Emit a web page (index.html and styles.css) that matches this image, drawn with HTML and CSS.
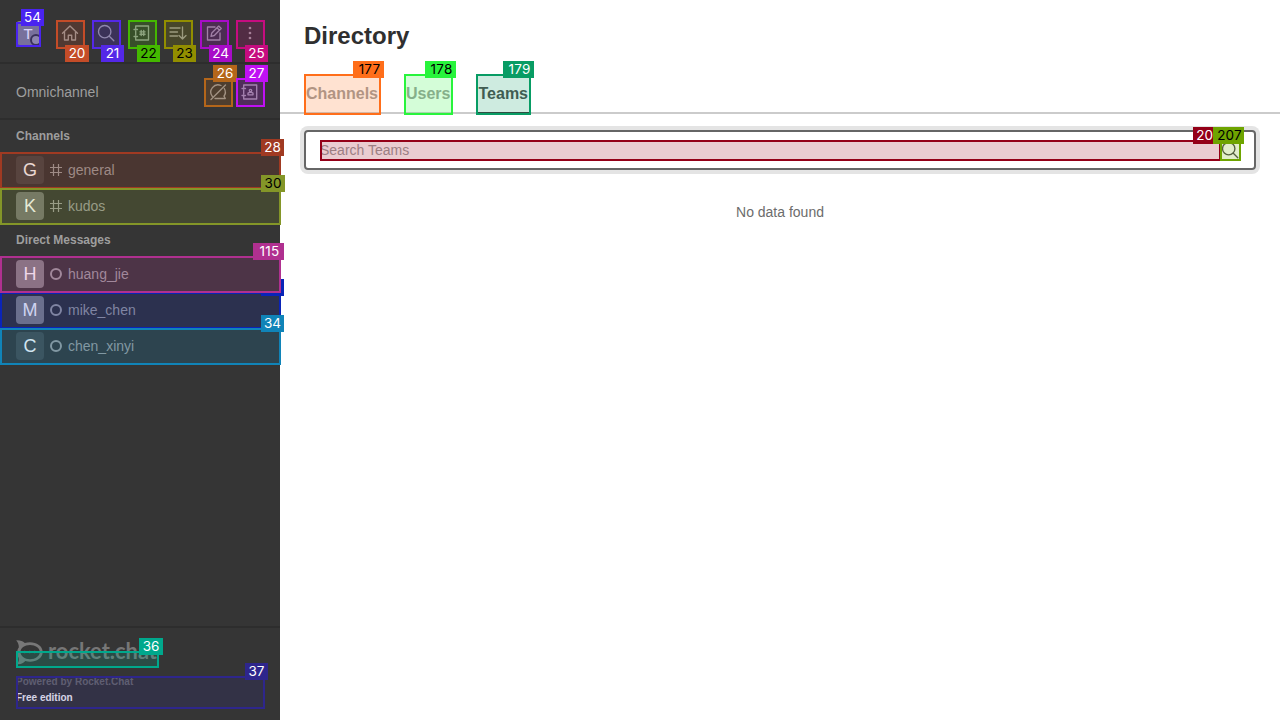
FILE: index.html
```html
<!DOCTYPE html>
<html lang="en">
<head>
<meta charset="utf-8">
<title>Directory</title>
<link rel="stylesheet" href="styles.css">
</head>
<body>
<div class="app">
  <aside class="sidebar">
    <header class="toolbar">
      <div class="avatar avatar-small">T<span class="presence"></span></div>
      <nav class="tools">
        <svg class="icon" viewBox="0 0 20 20"><path d="M2.500 10.200 10 3l7.500 7.200M4.500 9v8h3.800v-4.800h3.400V17h3.800V9"/></svg>
        <svg class="icon" viewBox="0 0 20 20"><circle cx="8.700" cy="8.700" r="6.200"/><path d="m13.300 13.300 4.500 4.500"/></svg>
        <svg class="icon" viewBox="0 0 20 20"><path d="M3.700 5.500v-2.500h12.800v14H3.700v-2.500M3.700 8v4M2 6.500h3.500M2 13.500h3.500M9.200 7.500v5M11.700 7.500v5M7.900 8.800h5.200M7.900 11.200h5.200"/></svg>
        <svg class="icon" viewBox="0 0 20 20"><path d="M2 5h10M2 9h7.500M2 13h7.500M14.500 4v12M11 12.500l3.500 3.500 3.500-3.500"/></svg>
        <svg class="icon" viewBox="0 0 20 20"><path d="M11 4H3.500v13H16V10M7 13.300l.8-3.300 6.900-6.900 2.500 2.500-6.900 6.900zM13 4.800l2.500 2.500"/></svg>
        <svg class="icon dots" viewBox="0 0 20 20"><circle cx="10" cy="5" r="1.350"/><circle cx="10" cy="10" r="1.350"/><circle cx="10" cy="15" r="1.350"/></svg>
      </nav>
    </header>
    <div class="omni">
      <span class="omni-title">Omnichannel</span>
      <svg class="icon" viewBox="0 0 20 20"><path d="M13 3.500A7.200 7.200 0 0 0 4.300 14.400M7 16.500h10.300l-1.300-2.300a7.200 7.200 0 0 0 .3-7.700M3 17.500 17.500 3"/></svg>
      <svg class="icon" viewBox="0 0 20 20"><path d="M3.700 5.500v-2.500h13v14h-13v-2.500M3.700 8v4M2 6.500h3.500M2 13.500h3.500M8 12.800v-1.600l1.500-.8h2l1.500.8v1.600z"/><circle cx="10.500" cy="8.500" r="1.200"/></svg>
    </div>
    <div class="rooms">
      <h2 class="group">Channels</h2>
      <div class="room"><span class="avatar tone-dark">G</span><svg class="kind" viewBox="0 0 12 12"><path d="M3.500 0v12M8.500 0v12M0 3.500h12M0 8.500h12"/></svg><span>general</span></div>
      <div class="room"><span class="avatar">K</span><svg class="kind" viewBox="0 0 12 12"><path d="M3.500 0v12M8.500 0v12M0 3.500h12M0 8.500h12"/></svg><span>kudos</span></div>
      <h2 class="group">Direct Messages</h2>
      <div class="room"><span class="avatar tone-light">H</span><span class="offline"></span><span>huang_jie</span></div>
      <div class="room"><span class="avatar tone-light">M</span><span class="offline"></span><span>mike_chen</span></div>
      <div class="room"><span class="avatar tone-blue">C</span><span class="offline"></span><span>chen_xinyi</span></div>
    </div>
    <footer class="brand">
      <svg class="logo" viewBox="0 0 144 26">
        <path fill-rule="evenodd" d="M.3.400C4 .2 6.800 1.200 8.800 3 17 .3 26.700 4.500 26.700 12S17 23.500 9.300 21C7.500 23.500 4 24.600 1 24c1.800-2 2.300-4.200 1.500-6.500C.8 15.500.6 10 2.800 7.500 3 4.800 2 2.300.3.400zM14 5C8.500 5 4.500 8 4.500 12s4 7.200 9.500 7.200S23.800 16 23.800 12 19.500 5 14 5z"/>
        <circle cx="8.700" cy="12" r="1.300"/><circle cx="13.700" cy="12" r="1.300"/><circle cx="18.700" cy="12" r="1.300"/>
        <text x="32" y="18.500" textLength="109" lengthAdjust="spacingAndGlyphs">rocket.chat</text>
      </svg>
      <p class="powered">Powered by Rocket.Chat</p>
      <p class="edition">Free edition</p>
    </footer>
  </aside>
  <main class="main">
    <h1 class="title">Directory</h1>
    <nav class="tabs"><span class="tab">Channels</span><span class="tab">Users</span><span class="tab active">Teams</span></nav>
    <div class="content">
      <div class="search"><span>Search Teams</span><svg class="icon" viewBox="0 0 20 20"><circle cx="8.700" cy="8.700" r="6.200"/><path d="m13.300 13.300 4.500 4.500"/></svg></div>
      <p class="empty">No data found</p>
    </div>
  </main>
</div>
<div class="marks">
  <div class="mark m54"><b>54</b></div>
  <div class="mark tool below m20"><b class="wide">20</b></div>
  <div class="mark tool below m21"><b>21</b></div>
  <div class="mark tool below m22 ink"><b>22</b></div>
  <div class="mark tool below m23 ink"><b>23</b></div>
  <div class="mark tool below m24"><b>24</b></div>
  <div class="mark tool below m25"><b>25</b></div>
  <div class="mark tool m26"><b class="wide">26</b></div>
  <div class="mark tool m27"><b>27</b></div>
  <div class="mark row m28"><b>28</b></div>
  <div class="mark row m30 ink"><b class="wide">30</b></div>
  <div class="mark row mike"><b></b></div>
  <div class="mark row m34"><b>34</b></div>
  <div class="mark row m115"><b class="three">115</b></div>
  <div class="mark m36"><b class="wide">36</b></div>
  <div class="mark m37"><b>37</b></div>
  <div class="mark tabmark m177 ink"><b class="three">177</b></div>
  <div class="mark tabmark m178 ink"><b class="three">178</b></div>
  <div class="mark tabmark m179"><b class="three">179</b></div>
  <div class="mark m206"><b class="cut">20</b></div>
  <div class="mark m207 ink"><b class="three">207</b></div>
</div>
</body>
</html>
```
FILE: styles.css
```css
* { box-sizing: border-box; }
body { margin: 0; position: relative; overflow: hidden; font-family: "Liberation Sans", Arial, sans-serif; font-size: 14px; background: #fff; }
h1, h2, p { margin: 0; }
.app { display: flex; height: 720px; }
.sidebar { width: 280px; display: flex; flex-direction: column; background: #353535; color: #9e9e9e; }
.toolbar { height: 64px; padding: 4px 16px 0; display: flex; align-items: center; justify-content: space-between; border-bottom: 2px solid #2d2d2d; }
.tools { display: flex; gap: 16px; padding-right: 4px; }
.icon { width: 20px; height: 20px; flex: none; fill: none; stroke: #9e9e9e; stroke-width: 1.350; stroke-linejoin: round; stroke-linecap: round; }
.dots { fill: #9e9e9e; stroke: none; }
.avatar { width: 28px; height: 28px; border-radius: 4px; display: flex; align-items: center; justify-content: center; flex: none; background: #737373; color: #fff; font-size: 18px; }
.avatar-small { width: 24px; height: 24px; position: relative; font-size: 15px; background: #848488; }
.tone-light { background: #828282; }
.tone-dark { background: #474646; }
.tone-blue { background: #474a4c; }
.presence { position: absolute; right: -2px; bottom: -1px; width: 12px; height: 12px; border: 2px solid #353535; border-radius: 50%; background: #9e9e9e; }
.omni { height: 56px; padding: 2px 20px 0 16px; display: flex; align-items: center; gap: 12px; border-bottom: 2px solid #2d2d2d; }
.omni-title { flex: 1; }
.rooms { flex: 1; }
.group { height: 32px; padding-left: 16px; font-size: 12px; line-height: 32px; }
.room { height: 36px; padding-left: 16px; display: flex; align-items: center; }
.kind, .offline { width: 12px; height: 12px; margin: 0 6px; }
.kind { fill: none; stroke: #9e9e9e; stroke-width: 1.200; }
.offline { border: 2px solid #9e9e9e; border-radius: 50%; }
.brand { height: 94px; padding: 12px 16px 0; border-top: 2px solid #2d2d2d; font-size: 10px; font-weight: bold; }
.logo { display: block; width: 144px; height: 26px; overflow: visible; fill: #777; }
.logo text { font: 700 23px Lato, sans-serif; }
.powered { margin-top: 8px; line-height: 16px; color: #6c6c6c; }
.edition { line-height: 16px; color: #fff; }
.main { flex: 1; color: #2f343d; }
.title { height: 74px; padding: 22px 24px 0; font-size: 24px; line-height: 28px; color: #2f2f2f; }
.tabs { height: 40px; padding: 0 24px; display: flex; gap: 24px; border-bottom: 2px solid #cbcbcb; font-size: 16px; font-weight: bold; color: #9e9e9e; }
.tab { height: 40px; padding: 0 2px; line-height: 40px; border-bottom: 2px solid transparent; }
.active { color: #4e4e4e; border-color: #3a3a3a; }
.content { padding: 16px 24px; }
.search { height: 40px; padding: 0 14px; display: flex; align-items: center; justify-content: space-between; border: 2px solid #666; border-radius: 4px; box-shadow: 0 0 0 4px #e4e4e4; color: #9e9e9e; }
.search .icon { stroke: #4e4e4e; }
.empty { padding-top: 34px; text-align: center; line-height: 16px; color: #6c6c6c; }

/* Numbered annotations laid over the interface */
.marks { position: absolute; inset: 0; }
.mark { position: absolute; border: 2px solid var(--c); background: color-mix(in srgb, var(--c) 20%, transparent); }
.mark b { position: absolute; right: -5px; top: -15px; width: 23px; height: 17px; background: var(--c); color: #fff; font: 400 13.500px/17px Inter, sans-serif; text-align: center; white-space: nowrap; }
.mark .wide { width: 24px; }
.mark .three { width: 31px; padding-left: 2px; letter-spacing: .2px; }
.mark .cut { right: 6px; width: 20px; text-align: right; }
.ink b { color: #000; }
.tool { width: 29px; height: 29px; top: 78px; }
.below { top: 20px; }
.below b { top: 23px; }
.tool .wide { right: -6px; }
.row { left: 0; width: 281px; height: 37px; }
.row .wide { right: -6px; }
.tabmark { top: 74px; height: 41px; }
.m54 { --c: #4a24f0; left: 16px; top: 22px; width: 25px; height: 25px; }
.m20 { --c: #c44c28; left: 56px; }
.m21 { --c: #5428e8; left: 92px; }
.m22 { --c: #44b800; left: 128px; }
.m23 { --c: #928e00; left: 164px; }
.m24 { --c: #a80cc8; left: 200px; }
.m25 { --c: #c60c80; left: 236px; }
.m26 { --c: #b4661a; left: 204px; }
.m27 { --c: #c010f4; left: 236px; }
.m28 { --c: #a03a22; top: 152px; }
.m30 { --c: #849628; top: 188px; }
.mike { --c: #0a24b8; top: 292px; }
.mike b { clip-path: polygon(20px 0, 100% 0, 100% 100%, 0 100%, 0 14px, 20px 14px); }
.m34 { --c: #1084b8; top: 328px; }
.m115 { --c: #b03090; top: 256px; }
.m36 { --c: #00a88c; left: 16px; top: 651px; width: 143px; height: 17px; }
.m36 .wide { right: -6px; }
.m37 { --c: #2e268c; left: 16px; top: 676px; width: 249px; height: 33px; }
.m177 { --c: #ff6e1a; left: 304px; width: 77px; }
.m178 { --c: #28f43c; left: 404px; width: 49px; }
.m179 { --c: #089c64; left: 476px; width: 55px; }
.m206 { --c: #940018; left: 320px; top: 140px; width: 901px; height: 21px; }
.m207 { --c: #6ea400; left: 1220px; top: 140px; width: 21px; height: 21px; }
```
